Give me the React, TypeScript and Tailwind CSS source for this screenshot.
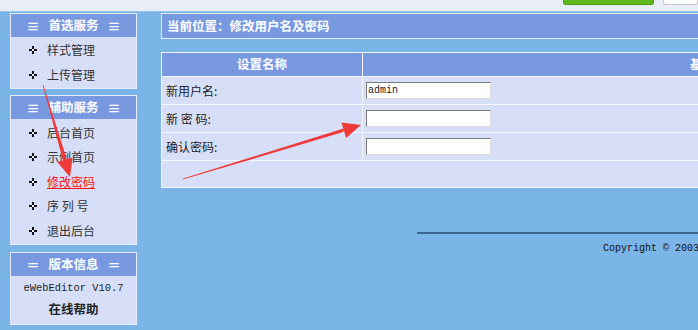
import React from "react";

const cjk = { fontFamily: '"Noto Sans CJK SC", "Liberation Sans", sans-serif' };
const mono = { fontFamily: '"Liberation Mono", "Noto Sans CJK SC", monospace' };

function Dot() {
  return (
    <svg width="8" height="8" viewBox="0 0 8 8" className="shrink-0" shapeRendering="crispEdges">
      <rect x="3" y="0" width="2" height="3" fill="#111" />
      <rect x="0" y="3" width="3" height="2" fill="#111" />
      <rect x="5" y="3" width="3" height="2" fill="#111" />
      <rect x="3" y="5" width="2" height="3" fill="#111" />
      <rect x="3" y="3" width="2" height="2" fill="#fff" />
    </svg>
  );
}

function Item({ label, red }: { label: string; red?: boolean }) {
  return (
    <div className="flex h-[24.5px] items-center pl-[18px] gap-[10px]">
      <Dot />
      <span
        className={
          red
            ? "text-[12px] text-[#ff1010] underline leading-none"
            : "text-[12px] text-[#333] leading-none"
        }
        style={cjk}
      >
        {label}
      </span>
    </div>
  );
}

function Header({ title, eq }: { title: string; eq: string }) {
  return (
    <div
      className="flex h-[23px] items-center justify-center gap-[9px] bg-[#7899e0] text-white"
      style={cjk}
    >
      <span className="text-[13px] font-bold leading-none">{eq}</span>
      <span className="text-[12.5px] font-bold leading-none">{title}</span>
      <span className="text-[13px] font-bold leading-none">{eq}</span>
    </div>
  );
}

function Row({ label, value }: { label: string; value?: string }) {
  return (
    <div className="flex h-[28px] border-t border-[#f4f7fd]">
      <div className="w-[200px] flex items-center pl-[4px] text-[12px] text-[#222] whitespace-pre" style={cjk}>
        {label}
      </div>
      <div className="flex-1 border-l border-[#f4f7fd] flex items-center pl-[3px]">
        <div
          className="w-[125px] h-[17px] bg-white border border-t-[#7c7c7c] border-l-[#7c7c7c] border-r-[#dcdcdc] border-b-[#dcdcdc] flex items-center pl-[1px] text-[10px] text-[#222]"
          style={mono}
        >
          {value}
        </div>
      </div>
    </div>
  );
}

export default function App() {
  return (
    <div className="relative w-[698px] h-[330px] overflow-hidden bg-[#7bb4e6]" style={cjk}>
      {/* top strip */}
      <div className="flex h-[12px] items-start bg-[#e9edf6] border-b border-[#96c6ee] pl-[563px]">
        <div className="w-[105px] h-[5px] bg-[#5cb91e] border border-t-0 border-[#4ca010] rounded-b-[3px]" />
        <div className="ml-[9px] w-[40px] h-[5px] bg-white border border-t-0 border-[#c9c9c9] rounded-b-[3px]" />
      </div>

      <div className="flex">
        {/* sidebar */}
        <div className="ml-[10px] mt-[1px] w-[127px] flex flex-col gap-[6px] shrink-0">
          <div className="border border-[#e6edfa] bg-[#d7dff8]">
            <Header title="首选服务" eq="≡" />
            <div className="py-[1px]">
              <Item label="样式管理" />
              <Item label="上传管理" />
            </div>
          </div>
          <div className="border border-[#e6edfa] bg-[#d7dff8]">
            <Header title="辅助服务" eq="≡" />
            <div className="pt-[1.5px] pb-[0.5px]">
              <Item label="后台首页" />
              <Item label="示例首页" />
              <Item label="修改密码" red />
              <Item label="序 列 号" />
              <Item label="退出后台" />
            </div>
          </div>
          <div className="border border-[#e6edfa] bg-[#d7dff8] mt-[1px]">
            <Header title="版本信息" eq="＝" />
            <div className="flex flex-col items-center pt-[3px] pb-[3px]">
              <div className="h-[20px] flex items-center text-[10.4px] text-[#222]" style={mono}>
                eWebEditor V10.7
              </div>
              <div className="h-[22px] flex items-center text-[12.5px] font-bold text-[#222]" style={cjk}>
                在线帮助
              </div>
            </div>
          </div>
        </div>

        {/* main */}
        <div className="ml-[24px] mt-[1px] w-[700px] shrink-0">
          <div className="border border-[#e6edfa] bg-[#7899e0] h-[26px] flex items-center pl-[5px]">
            <span className="text-[12.5px] font-bold text-white" style={cjk}>
              当前位置：修改用户名及密码
            </span>
          </div>

          <div className="mt-[13px] border border-[#f4f7fd] bg-[#d7dff8]">
            <div className="flex h-[23px] bg-[#7899e0]">
              <div className="w-[200px] flex items-center justify-center text-[12.5px] font-bold text-white" style={cjk}>
                设置名称
              </div>
              <div className="flex-1 border-l border-[#f4f7fd] flex items-center pl-[327px] text-[12.5px] font-bold text-white" style={cjk}>
                基本设置
              </div>
            </div>
            <Row label="新用户名:" value="admin" />
            <Row label="新 密 码:" />
            <Row label="确认密码:" />
            <div className="h-[27px] border-t border-[#f4f7fd]" />
          </div>

          <div className="mt-[44px] ml-[256px] h-[2px] bg-[#3e6792]" />
          <div className="mt-[7px] ml-[442px] text-[10px] text-[#111] whitespace-nowrap" style={mono}>
            Copyright © 2003-2015 eWebSoft.com
          </div>
        </div>
      </div>

      {/* annotation arrows */}
      <svg className="absolute left-0 top-0 pointer-events-none" width="698" height="330" viewBox="0 0 698 330">
        <polygon points="42.6,85.1 43.4,84.9 66.8,159.2 63.0,160.3" fill="#f03a3a" />
        <polygon points="70,177 57.2,162 72.6,157.5" fill="#f03a3a" />
        <polygon points="182.8,179.6 183.2,178.4 344.4,128.3 343.2,132.1" fill="#f03a3a" />
        <polygon points="361,125 341.5,122.5 346.1,137.9" fill="#f03a3a" />
      </svg>
    </div>
  );
}
